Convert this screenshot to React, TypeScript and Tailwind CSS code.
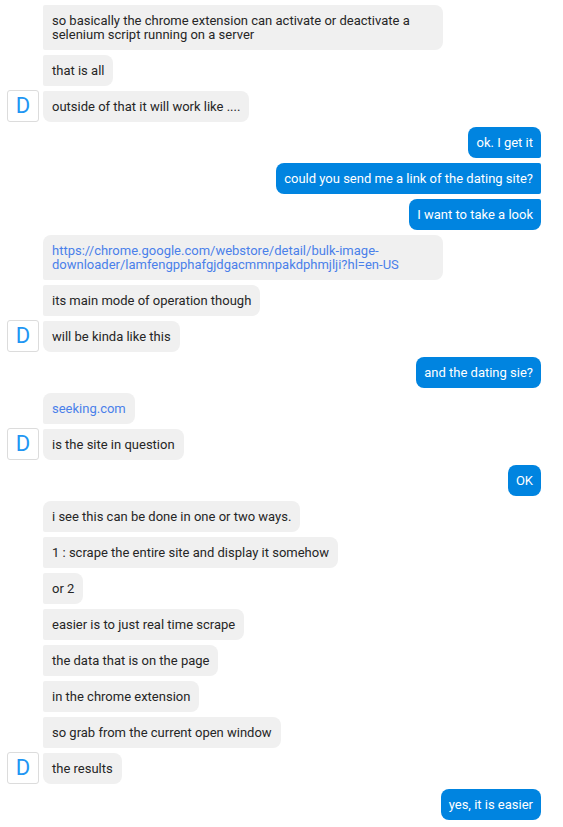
type Msg = { from: "them" | "me"; text: string; link?: boolean };

const groups: Msg[][] = [
  [
    { from: "them", text: "so basically the chrome extension can activate or deactivate a selenium script running on a server" },
    { from: "them", text: "that is all" },
    { from: "them", text: "outside of that it will work like ...." },
  ],
  [
    { from: "me", text: "ok. I get it" },
    { from: "me", text: "could you send me a link of the dating site?" },
    { from: "me", text: "I want to take a look" },
  ],
  [
    { from: "them", text: "https://chrome.google.com/webstore/detail/bulk-image-downloader/lamfengpphafgjdgacmmnpakdphmjlji?hl=en-US", link: true },
    { from: "them", text: "its main mode of operation though" },
    { from: "them", text: "will be kinda like this" },
  ],
  [{ from: "me", text: "and the dating sie?" }],
  [
    { from: "them", text: "seeking.com", link: true },
    { from: "them", text: "is the site in question" },
  ],
  [{ from: "me", text: "OK" }],
  [
    { from: "them", text: "i see this can be done in one or two ways." },
    { from: "them", text: "1 : scrape the entire site and display it somehow" },
    { from: "them", text: "or 2" },
    { from: "them", text: "easier is to just real time scrape" },
    { from: "them", text: "the data that is on the page" },
    { from: "them", text: "in the chrome extension" },
    { from: "them", text: "so grab from the current open window" },
    { from: "them", text: "the results" },
  ],
  [{ from: "me", text: "yes, it is easier" }],
];

const Avatar = () => (
  <div className="-mt-px flex h-8 w-8 shrink-0 items-center justify-center rounded-[3px] border border-[#dcdcdc] bg-white text-[22px] leading-none text-[#2196f3]">
    D
  </div>
);

const Bubble = ({ m, first, last }: { m: Msg; first: boolean; last: boolean }) => {
  if (m.from === "me") {
    return (
      <div
        className={`max-w-[400px] break-words bg-[#0084e0] px-[8px] pt-[9px] pb-[8px] text-[13px] leading-[14px] text-white rounded-l-[8px] ${
          first ? "rounded-tr-[8px]" : "rounded-tr-[2px]"
        } ${last ? "rounded-br-[8px]" : "rounded-br-[2px]"}`}
      >
        {m.text}
      </div>
    );
  }
  return (
    <div
      className={`max-w-[400px] break-words bg-[#f0f0f0] px-[9px] pt-[9px] pb-[8px] text-[13px] leading-[14px] rounded-r-[8px] ${
        first ? "rounded-tl-[8px]" : "rounded-tl-[2px]"
      } ${last ? "rounded-bl-[8px]" : "rounded-bl-[2px]"} ${m.link ? "text-[#4a80ea]" : "text-[#262626]"}`}
    >
      {m.text}
    </div>
  );
};

export default function App() {
  return (
    <div
      className="flex min-h-screen w-full flex-col gap-[5px] bg-white pt-[5px] pr-[22px] pl-[7px]"
      style={{ fontFamily: "Roboto, 'Noto Sans', sans-serif" }}
    >
      {groups.map((g, gi) =>
        g.map((m, i) => {
          const last = i === g.length - 1;
          const first = i === 0;
          if (m.from === "me") {
            return (
              <div key={`${gi}-${i}`} className="flex justify-end">
                <Bubble m={m} first={first} last={last} />
              </div>
            );
          }
          return (
            <div key={`${gi}-${i}`} className="flex items-end gap-[4px]">
              {last ? <Avatar /> : <div className="w-8 shrink-0" />}
              <Bubble m={m} first={first && gi !== 0} last={last} />
            </div>
          );
        })
      )}
    </div>
  );
}
